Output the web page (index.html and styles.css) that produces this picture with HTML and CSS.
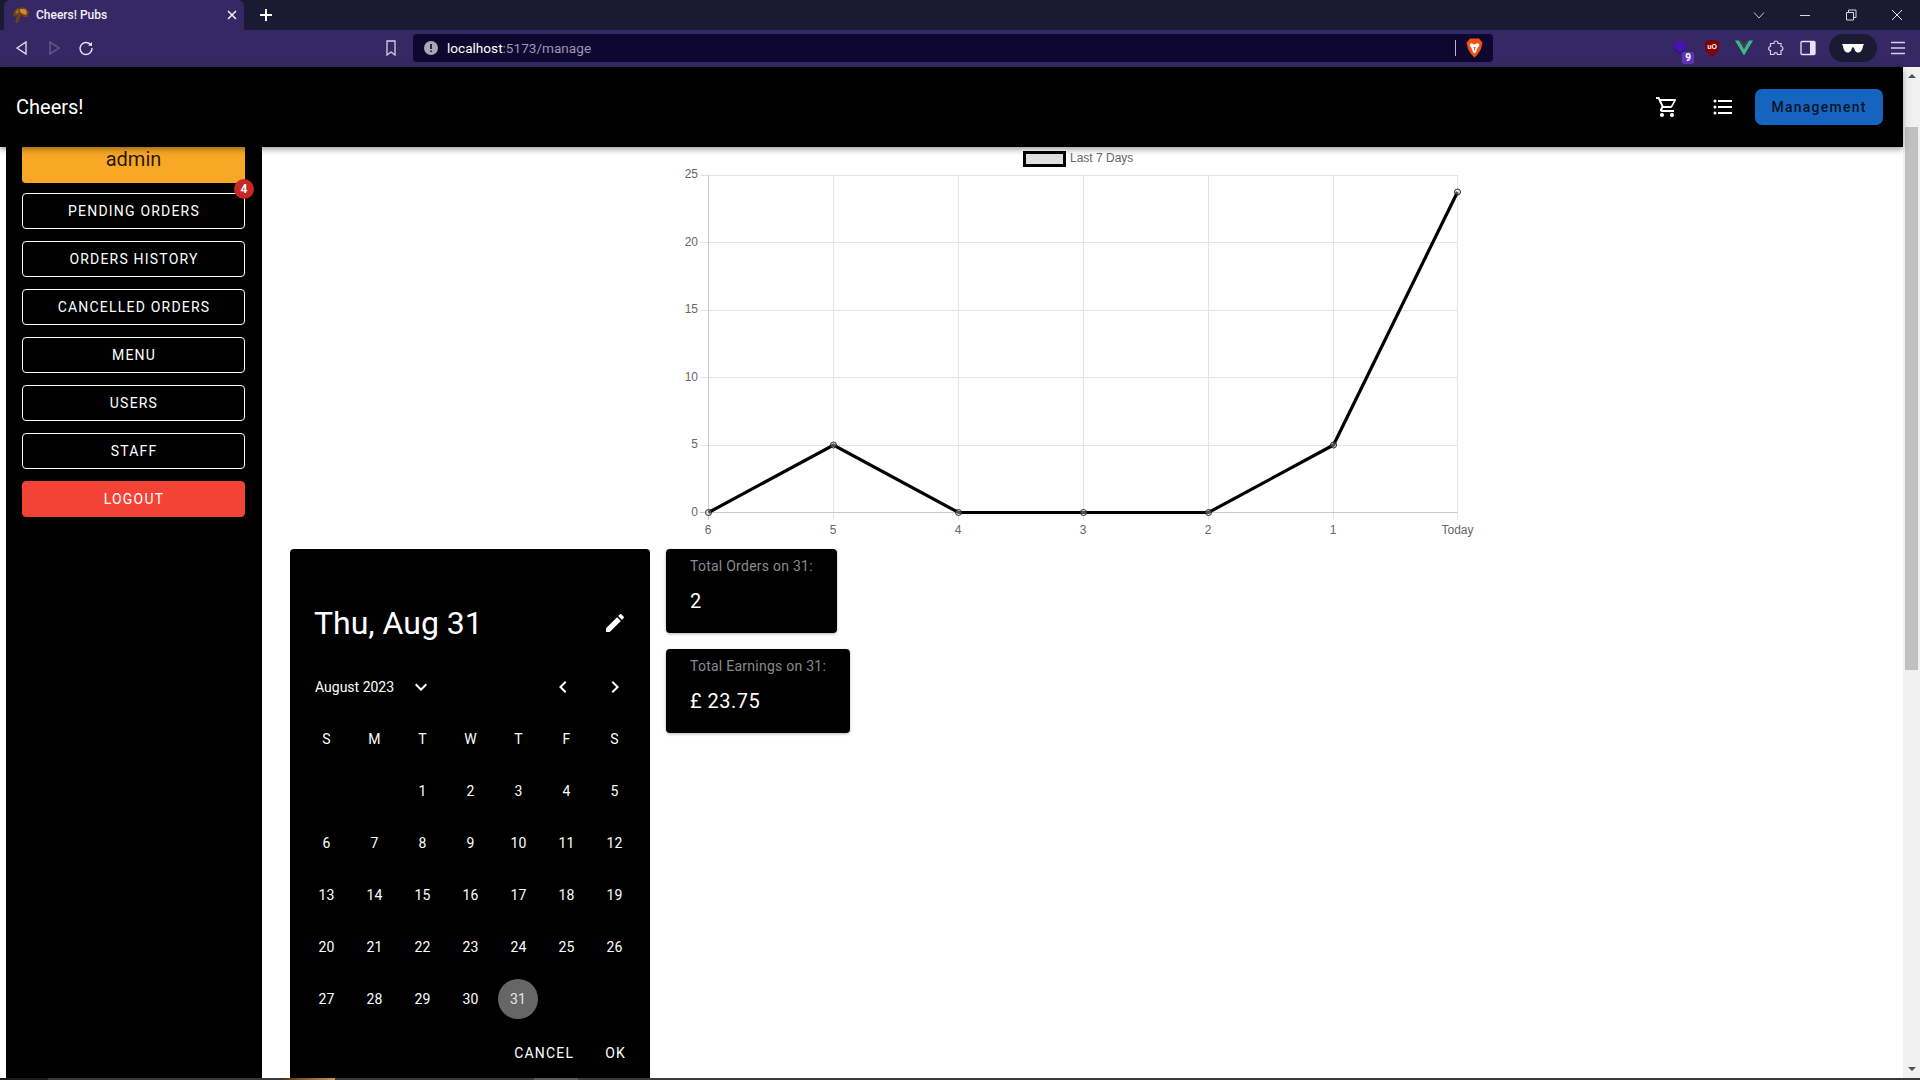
FILE: index.html
```html
<!DOCTYPE html>
<html lang="en">
  <head>
    <meta charset="UTF-8" />
    <title>Cheers! Pubs</title>
    <link rel="stylesheet" href="styles.css">
  </head>
  <body>
    <div class="window">
      <!-- browser tabs -->
      <div class="tabstrip">
        <div class="tab">
          <svg class="favicon" width="18" height="18" viewBox="0 0 18 18">
            <path d="M1 8 L4 3 L9 1 L14 2 L17 6 L16 11 L12 11 L9 9 L6 17 L3 17 L5 9 L2 11 Z" fill="#6e4218" />
            <path d="M8 3 L13 3 L15 6 L14 9 L11 8 L8 6 Z" fill="#d08a35" />
            <path d="M3 6 L6 3 L7 6 L5 8 Z" fill="#a8692a" />
          </svg>
          <span class="tab-title">Cheers! Pubs</span>
          <svg width="12" height="12" viewBox="0 0 12 12">
            <path d="M2 2 L10 10 M10 2 L2 10" stroke="#fff" stroke-width="1.4" />
          </svg>
        </div>
        <div class="new-tab">
          <svg width="14" height="14" viewBox="0 0 14 14">
            <path d="M7 1 V13 M1 7 H13" stroke="#fff" stroke-width="2" />
          </svg>
        </div>
        <div class="win-controls">
          <div class="win-btn">
            <svg width="12" height="12" viewBox="0 0 12 12"><path d="M1 3.5 L6 9 L11 3.5" fill="none" stroke="#c9c7d6" /></svg>
          </div>
          <div class="win-btn">
            <svg width="12" height="12" viewBox="0 0 12 12"><path d="M1 6.5 H11" stroke="#d9d8e2" /></svg>
          </div>
          <div class="win-btn">
            <svg width="12" height="12" viewBox="0 0 12 12"><path d="M1.5 3.5 H8.5 V11 H1.5 Z M3.5 3.5 V1 H11 V8.5 H8.5" fill="none" stroke="#d9d8e2" /></svg>
          </div>
          <div class="win-btn">
            <svg width="12" height="12" viewBox="0 0 12 12"><path d="M1 1 L11 11 M11 1 L1 11" stroke="#e4e3ec" /></svg>
          </div>
        </div>
      </div>

      <!-- browser toolbar -->
      <div class="toolbar">
        <div class="nav-btn">
          <svg width="16" height="16" viewBox="0 0 16 16"><path d="M3 8 L12 2 V14 Z" fill="none" stroke="#e6e4f0" stroke-width="1.3" /></svg>
        </div>
        <div class="nav-btn">
          <svg width="16" height="16" viewBox="0 0 16 16"><path d="M13 8 L4 2 V14 Z" fill="none" stroke="#6a5f92" stroke-width="1.3" /></svg>
        </div>
        <div class="nav-btn">
          <svg width="16" height="16" viewBox="0 0 16 16">
            <path d="M12.5 4.5 A6 6 0 1 0 14 8" fill="none" stroke="#e6e4f0" stroke-width="1.4" />
            <path d="M10 5.5 L14 6 V2 Z" fill="#e6e4f0" />
          </svg>
        </div>
        <div class="bookmark">
          <svg width="14" height="16" viewBox="0 0 14 16"><path d="M3 1 H11 V15 L7 12 L3 15 Z" fill="none" stroke="#d4d1e2" stroke-width="1.3" /></svg>
        </div>
        <div class="addressbar">
          <svg width="14" height="14" viewBox="0 0 14 14">
            <circle cx="7" cy="7" r="7" fill="#a9a8b4" />
            <path d="M7 3 V8 M7 9.5 V11" stroke="#0e0730" stroke-width="1.6" />
          </svg>
          <span class="url"><b>localhost</b>:5173/manage</span>
          <div class="addr-divider"></div>
          <svg width="17" height="20" viewBox="0 0 17 20">
            <path d="M4 0.5 H13 L15 3 L16.5 4.5 L15 11 L12 16 L8.5 19.5 L5 16 L2 11 L0.5 4.5 L2 3 Z" fill="#f1500f" />
            <path d="M5 5 L8.5 6.5 L12 5 L13.5 7 L11 11 L10 14 L8.5 15.5 L7 14 L6 11 L3.5 7 Z" fill="#fff" />
            <path d="M7.5 9 L8.5 13 L9.5 9 Z" fill="#f1500f" />
          </svg>
        </div>
        <div class="extensions">
          <div class="ext-btn">
            <svg width="18" height="18" viewBox="0 0 18 18">
              <path d="M1 9 L8 16 L15 10 L8 4 Z" fill="#2c1a86" />
              <path d="M1.5 7 L9 0.5 L16.5 7 L9 13.5 Z" fill="#4a12b5" />
            </svg>
            <span class="ext-badge">9</span>
          </div>
          <div class="ext-btn">
            <svg width="16" height="19" viewBox="0 0 16 19">
              <path d="M8 0.5 L15 2.5 V11 L8 18.5 L1 11 V2.5 Z" fill="#800000" />
              <text x="8" y="10" text-anchor="middle" class="ubo-text">uO</text>
            </svg>
          </div>
          <div class="ext-btn">
            <svg width="18" height="16" viewBox="0 0 18 16">
              <path d="M0 0.5 H4 L9 9 L14 0.5 H18 L9 15.5 Z" fill="#41b883" />
              <path d="M4 0.5 H6.5 L9 5 L11.5 0.5 H14 L9 9 Z" fill="#35495e" />
            </svg>
          </div>
          <div class="ext-btn">
            <svg width="16" height="16" viewBox="0 0 16 16">
              <path d="M6 2.5 C6 0.5 10 0.5 10 2.5 V3.5 H13 V6.5 C15.5 6.5 15.5 10.5 13 10.5 V14.5 H9.5 C9.5 12 6 12 6 14.5 H2.5 V10.5 C0 10.5 0 6.5 2.5 6.5 V3.5 H6 Z" fill="none" stroke="#d4d1e2" stroke-width="1.2" />
            </svg>
          </div>
          <div class="ext-btn">
            <svg width="16" height="16" viewBox="0 0 16 16">
              <rect x="1" y="1.5" width="14" height="13" rx="1" fill="none" stroke="#e6e4f0" stroke-width="1.3" />
              <rect x="10" y="1.5" width="5" height="13" fill="#e6e4f0" />
            </svg>
          </div>
          <div class="profile-pill">
            <svg width="22" height="10" viewBox="0 0 22 10">
              <path d="M0 1 H22 L21 3 C20.5 7 19 9.5 16 9.5 C13.5 9.5 12.5 7 12 4.5 H10 C9.5 7 8.5 9.5 6 9.5 C3 9.5 1.5 7 1 3 Z" fill="#fff" />
            </svg>
          </div>
          <div class="ext-btn menu-btn">
            <svg width="16" height="14" viewBox="0 0 16 14"><path d="M1 1.5 H15 M1 7 H15 M1 12.5 H15" stroke="#d4d1e2" stroke-width="1.3" /></svg>
          </div>
        </div>
      </div>

      <div class="viewport">
        <div class="page">
          <header class="appbar">
            <span class="brand">Cheers!</span>
            <div class="appbar-actions">
              <div class="icon-btn">
                <svg width="24" height="24" viewBox="0 0 24 24"><path d="M17,18A2,2 0 0,1 19,20A2,2 0 0,1 17,22C15.89,22 15,21.1 15,20C15,18.89 15.89,18 17,18M1,2H4.27L5.21,4H20A1,1 0 0,1 21,5C21,5.17 20.95,5.34 20.88,5.5L17.3,11.97C16.96,12.58 16.3,13 15.55,13H8.1L7.2,14.63L7.17,14.75A0.25,0.25 0 0,0 7.42,15H19V17H7C5.89,17 5,16.1 5,15C5,14.65 5.09,14.32 5.24,14.04L6.6,11.59L3,4H1V2M7,18A2,2 0 0,1 9,20A2,2 0 0,1 7,22C5.89,22 5,21.1 5,20C5,18.89 5.89,18 7,18M16,11L18.78,6H6.14L8.5,11H16Z" /></svg>
              </div>
              <div class="icon-btn">
                <svg width="24" height="24" viewBox="0 0 24 24"><path d="M7,5H21V7H7V5M7,13V11H21V13H7M4,4.5A1.5,1.5 0 0,1 5.5,6A1.5,1.5 0 0,1 4,7.5A1.5,1.5 0 0,1 2.5,6A1.5,1.5 0 0,1 4,4.5M4,10.5A1.5,1.5 0 0,1 5.5,12A1.5,1.5 0 0,1 4,13.5A1.5,1.5 0 0,1 2.5,12A1.5,1.5 0 0,1 4,10.5M7,19V17H21V19H7M4,16.5A1.5,1.5 0 0,1 5.5,18A1.5,1.5 0 0,1 4,19.5A1.5,1.5 0 0,1 2.5,18A1.5,1.5 0 0,1 4,16.5Z" /></svg>
              </div>
              <div class="management-btn">Management</div>
            </div>
          </header>

          <div class="page-body">
            <nav class="sidebar">
              <div class="admin-box">admin</div>
              <div class="side-btn">
                Pending Orders
                <span class="badge">4</span>
              </div>
              <div class="side-btn">Orders History</div>
              <div class="side-btn">Cancelled Orders</div>
              <div class="side-btn">Menu</div>
              <div class="side-btn">Users</div>
              <div class="side-btn">Staff</div>
              <div class="side-btn logout">Logout</div>
            </nav>

            <main class="content">
              <div class="chart-wrap">
                <svg class="chart" width="801" height="402" viewBox="682 147 801 402">
                  <rect x="1024.5" y="152.5" width="40" height="13" class="legend-box" />
                  <text x="1070" y="162" class="chart-label">Last 7 Days</text>

                  <path class="grid" d="M700 175.5 H1457.5 M700 242.5 H1457.5 M700 310.5 H1457.5 M700 377.5 H1457.5 M700 445.5 H1457.5" />
                  <path class="grid" d="M833.5 175 V520 M958.5 175 V520 M1083.5 175 V520 M1208.5 175 V520 M1333.5 175 V520 M1457.5 175 V520" />
                  <path class="axis" d="M708.5 175 V520 M700 512.5 H1457.5" />

                  <text x="698" y="178" text-anchor="end" class="chart-label">25</text>
                  <text x="698" y="246" text-anchor="end" class="chart-label">20</text>
                  <text x="698" y="313" text-anchor="end" class="chart-label">15</text>
                  <text x="698" y="381" text-anchor="end" class="chart-label">10</text>
                  <text x="698" y="448" text-anchor="end" class="chart-label">5</text>
                  <text x="698" y="516" text-anchor="end" class="chart-label">0</text>

                  <text x="708" y="534" text-anchor="middle" class="chart-label">6</text>
                  <text x="833" y="534" text-anchor="middle" class="chart-label">5</text>
                  <text x="958" y="534" text-anchor="middle" class="chart-label">4</text>
                  <text x="1083" y="534" text-anchor="middle" class="chart-label">3</text>
                  <text x="1208" y="534" text-anchor="middle" class="chart-label">2</text>
                  <text x="1333" y="534" text-anchor="middle" class="chart-label">1</text>
                  <text x="1457.5" y="534" text-anchor="middle" class="chart-label">Today</text>

                  <polyline class="line" points="708.5,512.5 833.5,445 958.5,512.5 1083.5,512.5 1208.5,512.5 1333.5,445 1457.5,192" />
                  <circle class="point" cx="708.5" cy="512.5" r="3" />
                  <circle class="point" cx="833.5" cy="445" r="3" />
                  <circle class="point" cx="958.5" cy="512.5" r="3" />
                  <circle class="point" cx="1083.5" cy="512.5" r="3" />
                  <circle class="point" cx="1208.5" cy="512.5" r="3" />
                  <circle class="point" cx="1333.5" cy="445" r="3" />
                  <circle class="point" cx="1457.5" cy="192" r="3" />
                </svg>
              </div>

              <div class="lower">
                <div class="picker">
                  <div class="picker-title">
                    <span>Thu, Aug 31</span>
                    <svg width="24" height="24" viewBox="0 0 24 24"><path d="M20.71,7.04C21.1,6.65 21.1,6 20.71,5.63L18.37,3.29C18,2.9 17.35,2.9 16.96,3.29L15.12,5.12L18.87,8.87M3,17.25V21H6.75L17.81,9.93L14.06,6.18L3,17.25Z" /></svg>
                  </div>
                  <div class="picker-month">
                    <span class="month-name">August 2023</span>
                    <svg width="24" height="24" viewBox="0 0 24 24"><path d="M7.41,8.58L12,13.17L16.59,8.58L18,10L12,16L6,10L7.41,8.58Z" /></svg>
                    <div class="month-arrows">
                      <svg width="24" height="24" viewBox="0 0 24 24"><path d="M15.41,16.58L10.83,12L15.41,7.41L14,6L8,12L14,18L15.41,16.58Z" /></svg>
                      <svg width="24" height="24" viewBox="0 0 24 24"><path d="M8.59,16.58L13.17,12L8.59,7.41L10,6L16,12L10,18L8.59,16.58Z" /></svg>
                    </div>
                  </div>
                  <div class="days weekdays">
                    <span>S</span><span>M</span><span>T</span><span>W</span><span>T</span><span>F</span><span>S</span>
                  </div>
                  <div class="days">
                    <span></span><span></span><span>1</span><span>2</span><span>3</span><span>4</span><span>5</span>
                    <span>6</span><span>7</span><span>8</span><span>9</span><span>10</span><span>11</span><span>12</span>
                    <span>13</span><span>14</span><span>15</span><span>16</span><span>17</span><span>18</span><span>19</span>
                    <span>20</span><span>21</span><span>22</span><span>23</span><span>24</span><span>25</span><span>26</span>
                    <span>27</span><span>28</span><span>29</span><span>30</span><span><i class="selected">31</i></span>
                  </div>
                  <div class="picker-actions">
                    <span>Cancel</span>
                    <span>OK</span>
                  </div>
                </div>

                <div class="stats">
                  <div class="stat-card">
                    <div class="stat-label">Total Orders on 31:</div>
                    <div class="stat-value">2</div>
                  </div>
                  <div class="stat-card">
                    <div class="stat-label">Total Earnings on 31:</div>
                    <div class="stat-value">£ 23.75</div>
                  </div>
                </div>
              </div>
            </main>
          </div>
        </div>

        <div class="scrollbar">
          <div class="arrow-up"></div>
          <div class="thumb"></div>
          <div class="arrow-down"></div>
        </div>
      </div>

      <div class="taskbar-edge">
        <div class="edge-dark"></div>
        <div class="edge-gold"></div>
        <div class="edge-mid"></div>
        <div class="edge-light"></div>
      </div>
    </div>
  </body>
</html>
```

FILE: styles.css
```css
* {
  box-sizing: border-box;
}

body {
  margin: 0;
  background: white;
  font-family: Roboto, 'Liberation Sans', sans-serif;
  overflow: hidden;
}

.window {
  width: 1920px;
  height: 1080px;
  display: flex;
  flex-direction: column;
  overflow: hidden;
}

/* browser chrome */
.tabstrip {
  height: 30px;
  padding-left: 4px;
  background: #1b1a33;
  display: flex;
  align-items: center;
  flex-shrink: 0;
}

.tab {
  width: 240px;
  height: 30px;
  padding: 0 6px 0 8px;
  background: #352864;
  border-radius: 6px 6px 0 0;
  display: flex;
  align-items: center;
}

.favicon {
  margin-right: 6px;
}

.tab-title {
  flex: 1;
  color: #f2f1f7;
  font-size: 12px;
  font-weight: 500;
}

.new-tab {
  width: 32px;
  margin-left: 6px;
  display: flex;
  justify-content: center;
}

.win-controls {
  margin-left: auto;
  display: flex;
}

.win-btn {
  width: 46px;
  height: 30px;
  display: flex;
  align-items: center;
  justify-content: center;
}

.toolbar {
  height: 37px;
  padding: 0 0 1px 6px;
  background: #352864;
  display: flex;
  align-items: center;
  flex-shrink: 0;
}

.nav-btn {
  width: 32px;
  display: flex;
  justify-content: center;
}

.bookmark {
  width: 24px;
  margin-left: 277px;
  margin-right: 10px;
  display: flex;
  justify-content: center;
}

.addressbar {
  width: 1080px;
  height: 28px;
  padding: 0 10px 0 11px;
  background: #0e0730;
  border-radius: 4px;
  display: flex;
  align-items: center;
}

.url {
  margin-left: 9px;
  color: #9b97b3;
  font-size: 13.6px;
}

.url b {
  color: #fff;
  font-weight: 400;
}

.addr-divider {
  width: 1px;
  height: 16px;
  margin-left: auto;
  margin-right: 10px;
  background: #b9b6c9;
}

.extensions {
  margin-left: auto;
  padding-right: 6px;
  display: flex;
  align-items: center;
}

.ext-btn {
  position: relative;
  width: 32px;
  display: flex;
  justify-content: center;
}

.ext-badge {
  position: absolute;
  top: 13px;
  right: 2px;
  width: 12px;
  height: 12px;
  background: #5f35b5;
  border-radius: 2px;
  color: #fff;
  font-size: 10px;
  font-weight: 700;
  line-height: 12px;
  text-align: center;
}

.ubo-text {
  fill: #fff;
  font-family: 'Liberation Sans', sans-serif;
  font-size: 7px;
  font-weight: 700;
}

.profile-pill {
  width: 48px;
  height: 28px;
  margin-left: 5px;
  background: #1b1a33;
  border-radius: 14px;
  display: flex;
  align-items: center;
  justify-content: center;
}

.menu-btn {
  margin-left: 5px;
}

/* page */
.viewport {
  flex: 1;
  min-height: 0;
  display: flex;
}

.page {
  flex: 1;
  min-width: 0;
  display: flex;
  flex-direction: column;
}

.appbar {
  height: 80px;
  padding: 0 20px 0 16px;
  background: black;
  color: white;
  display: flex;
  align-items: center;
  flex-shrink: 0;
  position: relative;
  z-index: 2;
  box-shadow: 0 2px 4px -1px rgba(0, 0, 0, 0.2), 0 4px 5px 0 rgba(0, 0, 0, 0.14), 0 1px 10px 0 rgba(0, 0, 0, 0.12);
}

.brand {
  font-size: 20px;
  font-weight: 450;
}

.appbar-actions {
  margin-left: auto;
  display: flex;
  align-items: center;
  gap: 8px;
}

.icon-btn {
  width: 48px;
  height: 48px;
  display: flex;
  align-items: center;
  justify-content: center;
}

.icon-btn svg,
.picker svg {
  fill: white;
}

.management-btn {
  width: 128px;
  height: 36px;
  background: #1565c0;
  border-radius: 7px;
  color: #071425;
  font-size: 14px;
  font-weight: 500;
  letter-spacing: 1.25px;
  line-height: 36px;
  text-align: center;
}

.page-body {
  flex: 1;
  min-height: 0;
  padding-left: 6px;
  display: flex;
  overflow: hidden;
}

.sidebar {
  width: 256px;
  padding: 0 17px 0 16px;
  background: black;
  display: flex;
  flex-direction: column;
  gap: 12px;
  flex-shrink: 0;
}

.admin-box {
  height: 36px;
  margin-bottom: -2px;
  background: #f9a825;
  border-radius: 0 0 4px 4px;
  color: rgba(0, 0, 0, 0.87);
  font-size: 20px;
  line-height: 24px;
  text-align: center;
}

.side-btn {
  position: relative;
  height: 36px;
  padding-left: 1px;
  border: 1px solid white;
  border-radius: 4px;
  color: white;
  font-size: 14px;
  font-weight: 450;
  letter-spacing: 1.2px;
  line-height: 34px;
  text-align: center;
  text-transform: uppercase;
}

.side-btn.logout {
  background: #f44336;
  border-color: #f44336;
}

.badge {
  position: absolute;
  top: -15px;
  right: -10px;
  width: 20px;
  height: 20px;
  background: #c62828;
  border-radius: 50%;
  font-size: 12px;
  font-weight: 700;
  letter-spacing: 0;
  line-height: 20px;
}

.content {
  flex: 1;
  min-width: 0;
  display: flex;
  flex-direction: column;
}

.chart-wrap {
  display: flex;
  justify-content: center;
  flex-shrink: 0;
}

.chart {
  display: block;
}

.chart-label {
  fill: #666;
  font-family: 'Liberation Sans', sans-serif;
  font-size: 12px;
}

.legend-box {
  fill: #e0e0e0;
  stroke: black;
  stroke-width: 3;
}

.grid {
  fill: none;
  stroke: #e4e4e4;
}

.axis {
  fill: none;
  stroke: #cbcbcb;
}

.line {
  fill: none;
  stroke: black;
  stroke-width: 3.2;
}

.point {
  fill: rgba(224, 224, 224, 0.35);
  stroke: #222;
}

.lower {
  padding-left: 28px;
  display: flex;
  align-items: flex-start;
  gap: 16px;
}

.picker {
  width: 360px;
  padding-bottom: 12px;
  background: black;
  border-radius: 4px;
  color: white;
  flex-shrink: 0;
}

.picker-title {
  height: 40px;
  margin-top: 54px;
  padding: 0 23px 0 24px;
  font-size: 32px;
  line-height: 40px;
  display: flex;
  align-items: center;
  justify-content: space-between;
}

.picker-month {
  height: 24px;
  margin-top: 32px;
  padding: 0 23px 0 25px;
  display: flex;
  align-items: center;
}

.month-name {
  margin-right: 15px;
  font-size: 14px;
}

.month-arrows {
  margin-left: auto;
  display: flex;
  gap: 28px;
}

.days {
  padding: 0 12px;
  display: grid;
  grid-template-columns: repeat(7, 48px);
  grid-auto-rows: 52px;
  font-size: 14px;
  font-weight: 450;
  letter-spacing: 0.1px;
}

.days span {
  padding-left: 1px;
  display: flex;
  align-items: center;
  justify-content: center;
}

.weekdays {
  margin-top: 14px;
}

.selected {
  width: 40px;
  height: 40px;
  margin-left: -1px;
  background: #666;
  border-radius: 50%;
  color: #e6e6e6;
  font-style: normal;
  line-height: 40px;
  text-align: center;
}

.picker-actions {
  height: 36px;
  margin-top: 10px;
  padding-right: 24px;
  font-size: 14px;
  font-weight: 450;
  letter-spacing: 1.2px;
  line-height: 36px;
  text-transform: uppercase;
  display: flex;
  justify-content: flex-end;
  gap: 31px;
}

.stats {
  display: flex;
  flex-direction: column;
  align-items: flex-start;
  gap: 16px;
}

.stat-card {
  height: 84px;
  padding: 7px 24px 0;
  background: black;
  border-radius: 4px;
  color: white;
  box-shadow: 0 1px 3px rgba(0, 0, 0, 0.3);
}

.stat-label {
  color: #8a8a8a;
  font-size: 14px;
  letter-spacing: 0.25px;
  line-height: 20px;
}

.stat-value {
  margin-top: 9px;
  font-size: 20px;
  letter-spacing: 0.5px;
  line-height: 32px;
}

/* page scrollbar */
.scrollbar {
  width: 17px;
  background: #f1f1f1;
  display: flex;
  flex-direction: column;
  align-items: center;
  flex-shrink: 0;
}

.arrow-up,
.arrow-down {
  width: 0;
  height: 0;
  border-left: 4px solid transparent;
  border-right: 4px solid transparent;
}

.arrow-up {
  margin-top: 7px;
  border-bottom: 4px solid #505050;
}

.arrow-down {
  margin-top: auto;
  margin-bottom: 7px;
  border-top: 4px solid #505050;
}

.thumb {
  width: 13px;
  height: 543px;
  margin-top: 49px;
  background: #c1c1c1;
}

/* sliver of the taskbar below the window */
.taskbar-edge {
  height: 2px;
  background: #3a3a3a;
  display: flex;
  flex-shrink: 0;
}

.edge-dark {
  width: 48px;
  background: #1c1c1c;
}

.edge-gold {
  width: 54px;
  margin-left: 233px;
  background: linear-gradient(90deg, #4a3420, #c8964e);
}

.edge-mid {
  width: 199px;
}

.edge-light {
  width: 44px;
  background: #5a5a5a;
}
```
